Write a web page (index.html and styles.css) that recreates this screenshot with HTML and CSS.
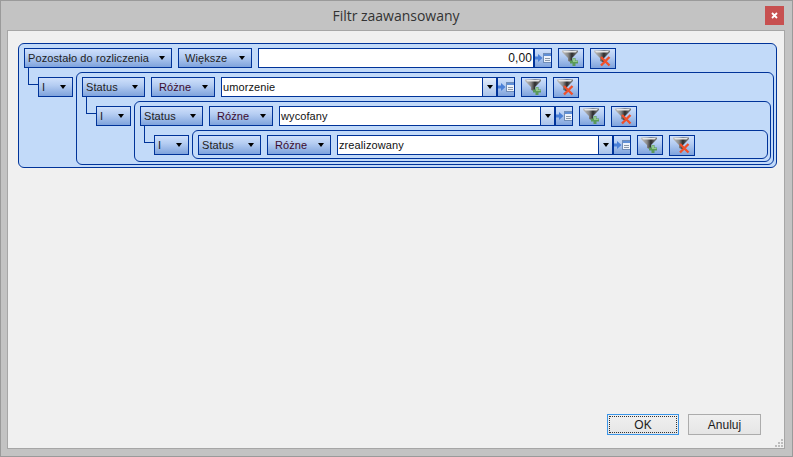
FILE: index.html
```html
<!DOCTYPE html>
<html lang="pl">
<head>
<meta charset="utf-8">
<title>Filtr zaawansowany</title>
<link rel="stylesheet" href="styles.css">
</head>
<body>
<svg class="defs" width="0" height="0" aria-hidden="true">
  <defs>
    <linearGradient id="funnelGrad" gradientUnits="userSpaceOnUse" x1="0" y1="0" x2="15" y2="0">
      <stop offset="0" stop-color="#c4c4c4"/>
      <stop offset="0.4" stop-color="#8a8a8a"/>
      <stop offset="0.66" stop-color="#2c2c2c"/>
      <stop offset="1" stop-color="#7a7a7a"/>
    </linearGradient>
    <g id="funnel">
      <path d="M0 0.5 H16 V2 L10 8 V12.5 L6 11 V8 L0 2 Z" fill="url(#funnelGrad)"/>
      <path d="M1 1 H15 L13.5 2.5 H2.5 Z" fill="#e6e6e6"/>
    </g>
    <g id="iconAdd">
      <use href="#funnel"/>
      <path d="M10.5 8 H13.5 V10.5 H16 V13.5 H13.5 V16 H10.5 V13.5 H8 V10.5 H10.5 Z" fill="#5a9a58"/>
      <path d="M11 8.5 H13 V11 H15.5 V12 H11 Z" fill="#93c98d"/>
    </g>
    <g id="iconDel">
      <use href="#funnel"/>
      <path d="M7 7 L15.5 15.5 M15.5 7 L7 15.5" fill="none" stroke="#f0502a" stroke-width="2.4"/>
    </g>
    <g id="iconLink">
      <path d="M0 3.5 H3 V1 L7.5 5 L3 9 V6.5 H0 Z" fill="#4a80d8"/>
      <rect x="8.5" y="0.5" width="8" height="9" fill="#eef3fb" stroke="#6f8db8"/>
      <rect x="9" y="1" width="7" height="2" fill="#5f8fd6"/>
      <path d="M10 5.5 H15 M10 7.5 H15" stroke="#8a98aa"/>
    </g>
  </defs>
</svg>
<div class="window">
  <header class="titlebar">
    <h1 class="title">Filtr zaawansowany</h1>
    <button class="close" type="button"><svg width="7" height="7" viewBox="0 0 7 7"><path d="M1 1 L6 6 M6 1 L1 6" stroke="#fff" stroke-width="1.8"/></svg></button>
  </header>
  <main class="client">
    <section class="panel panel-root">
      <div class="row">
        <div class="combo combo-field-long"><span class="combo-text">Pozostało do rozliczenia</span><i class="arrow"></i></div>
        <div class="combo combo-op"><span class="combo-text">Większe</span><i class="arrow"></i></div>
        <div class="field field-num"><span class="value">0,00</span></div>
        <button class="link" type="button"><svg width="18" height="10"><use href="#iconLink"/></svg></button>
        <button class="tool" type="button"><svg width="18" height="17"><use href="#iconAdd"/></svg></button>
        <button class="tool tool-del" type="button"><svg width="18" height="17"><use href="#iconDel"/></svg></button>
      </div>
      <div class="sub">
        <span class="connector"></span>
        <div class="combo combo-logic"><span class="combo-text">I</span><i class="arrow"></i></div>
        <section class="panel">
          <div class="row">
            <div class="combo combo-field"><span class="combo-text">Status</span><i class="arrow"></i></div>
            <div class="combo combo-ne"><span class="combo-text">Różne</span><i class="arrow"></i></div>
            <div class="field"><span class="value">umorzenie</span><span class="drop"><i class="arrow"></i></span></div>
            <button class="link" type="button"><svg width="18" height="10"><use href="#iconLink"/></svg></button>
            <button class="tool" type="button"><svg width="18" height="17"><use href="#iconAdd"/></svg></button>
            <button class="tool tool-del" type="button"><svg width="18" height="17"><use href="#iconDel"/></svg></button>
          </div>
          <div class="sub">
            <span class="connector"></span>
            <div class="combo combo-logic"><span class="combo-text">I</span><i class="arrow"></i></div>
            <section class="panel">
              <div class="row">
                <div class="combo combo-field"><span class="combo-text">Status</span><i class="arrow"></i></div>
                <div class="combo combo-ne"><span class="combo-text">Różne</span><i class="arrow"></i></div>
                <div class="field"><span class="value">wycofany</span><span class="drop"><i class="arrow"></i></span></div>
                <button class="link" type="button"><svg width="18" height="10"><use href="#iconLink"/></svg></button>
                <button class="tool" type="button"><svg width="18" height="17"><use href="#iconAdd"/></svg></button>
                <button class="tool tool-del" type="button"><svg width="18" height="17"><use href="#iconDel"/></svg></button>
              </div>
              <div class="sub">
                <span class="connector"></span>
                <div class="combo combo-logic"><span class="combo-text">I</span><i class="arrow"></i></div>
                <section class="panel">
                  <div class="row">
                    <div class="combo combo-field"><span class="combo-text">Status</span><i class="arrow"></i></div>
                    <div class="combo combo-ne"><span class="combo-text">Różne</span><i class="arrow"></i></div>
                    <div class="field"><span class="value">zrealizowany</span><span class="drop"><i class="arrow"></i></span></div>
                    <button class="link" type="button"><svg width="18" height="10"><use href="#iconLink"/></svg></button>
                    <button class="tool" type="button"><svg width="18" height="17"><use href="#iconAdd"/></svg></button>
                    <button class="tool tool-del" type="button"><svg width="18" height="17"><use href="#iconDel"/></svg></button>
                  </div>
                </section>
              </div>
            </section>
          </div>
        </section>
      </div>
    </section>
    <footer class="footer">
      <button class="btn btn-default" type="button"><span class="btn-focus">OK</span></button>
      <button class="btn" type="button">Anuluj</button>
    </footer>
    <svg class="grip" width="8" height="8" viewBox="0 0 8 8" aria-hidden="true">
      <path d="M6 0h2v2H6z M3 3h2v2H3z M6 3h2v2H6z M0 6h2v2H0z M3 6h2v2H3z M6 6h2v2H6z" fill="#bdbdbd"/>
    </svg>
  </main>
</div>
</body>
</html>
```
FILE: styles.css
```css
* { box-sizing: border-box; }
html, body { margin: 0; height: 100%; }
body { font: 11px/1 "Liberation Sans", Arial, sans-serif; letter-spacing: 0.1px; color: #1c1c1c; overflow: hidden; }
.defs { position: absolute; }
.window {
  width: 793px; height: 457px; display: flex; flex-direction: column;
  background: #c3c3c3; border: 1px solid #9a9a9a; padding: 0 7px 7px 6px;
}
.titlebar { height: 29px; flex: none; position: relative; display: flex; align-items: center; justify-content: center; }
.title { margin: 0; font: 400 14px/1 "Open Sans", sans-serif; letter-spacing: -0.02px; color: #333; }
.close {
  position: absolute; right: 1px; top: 5px; width: 19px; height: 19px; padding: 0; border: 0;
  background: #c75050; display: flex; align-items: center; justify-content: center;
}
.client {
  flex: 1; position: relative; display: flex; flex-direction: column;
  background: #f0f0f0; border: 1px solid #a6a6a6; padding: 12px 7px 13px 10px;
}
.panel {
  flex: 1; min-width: 0; background: #c2daf9; border: 1px solid #003399; border-radius: 6px;
  padding: 4px 2px 2px 5px;
}
.panel-root { flex: none; }
.row { display: flex; gap: 6px; height: 21px; align-items: flex-start; }
.sub { display: flex; align-items: flex-start; margin-top: 3px; position: relative; }
.connector {
  position: absolute; left: 4px; top: -4px; width: 10px; height: 17px;
  border-left: 1px solid #003399; border-bottom: 1px solid #003399;
}
.combo, .tool, .link, .drop {
  border: 1px solid #003399;
  background: linear-gradient(#cfe0fb 0%, #b5cdf2 40%, #7fa3dc 100%);
}
.combo {
  height: 20px; display: flex; align-items: center; justify-content: space-between;
  padding: 0 6px 0 3px; flex: none; position: relative; color: #222;
}
.combo-field-long { width: 148px; }
.combo-op { width: 74px; padding-left: 6px; }
.combo-field { width: 63px; }
.combo-ne { width: 64px; padding-left: 7px; color: #3d0a2e; }
.combo-logic { width: 35px; margin: 5px 3px 0 14px; }
.arrow {
  display: block; width: 0; height: 0; flex: none;
  border-left: 3.5px solid transparent; border-right: 3.5px solid transparent; border-top: 4px solid #000;
}
.field {
  width: 276px; height: 20px; flex: none; display: flex; align-items: center; justify-content: space-between;
  background: #fff; border: 1px solid #003399; color: #111; margin-right: -6px; padding-left: 1px; overflow: hidden;
}
.field-num { justify-content: flex-end; padding-right: 1px; font-size: 12px; }
.drop {
  width: 14px; height: 18px; display: flex; align-items: center; justify-content: center; flex: none;
  border-width: 0 0 0 1px; background: linear-gradient(#e4edfb, #a9c3ea);
}
.link {
  width: 18px; height: 20px; padding: 0; flex: none; display: flex; align-items: center; justify-content: center;
}
.tool {
  width: 26px; height: 20px; padding: 0 1px 0 0; flex: none; display: flex; align-items: center; justify-content: center;
}
.tool-del { height: 21px; }
.footer { margin-top: auto; display: flex; justify-content: flex-end; gap: 9px; padding-right: 16px; }
.btn {
  width: 73px; height: 21px; padding: 0; font: 12px/1 "Liberation Sans", Arial, sans-serif; color: #1c1c1c;
  background: linear-gradient(#f0f0f0, #e5e5e5); border: 1px solid #acacac;
}
.btn-default { width: 72px; border-color: #3c96e8; padding: 1px; }
.btn-focus {
  display: flex; align-items: center; justify-content: center; height: 100%;
  border: 1px dotted #333; font-size: 12px;
}
.grip { position: absolute; right: 1px; bottom: 1px; }
```
